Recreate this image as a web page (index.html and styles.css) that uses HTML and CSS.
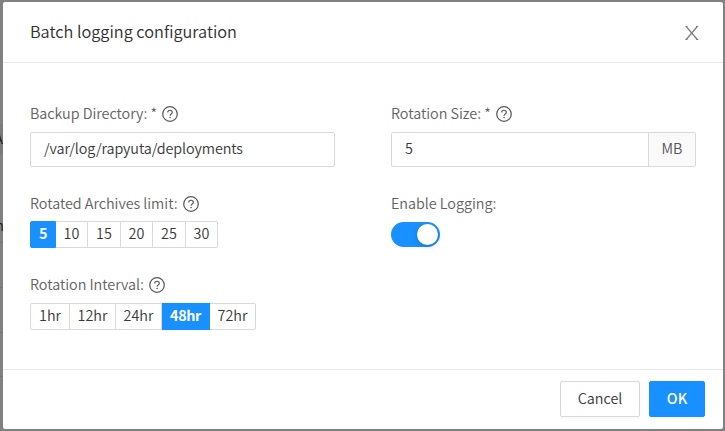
FILE: index.html
```html
<!DOCTYPE html>
<html lang="en">
<head>
<meta charset="utf-8">
<title>Batch logging configuration</title>
<link rel="stylesheet" href="styles.css">
</head>
<body>
<svg class="sprite" aria-hidden="true">
  <symbol id="help" viewBox="0 0 16 16">
    <circle cx="8" cy="8" r="7.3" fill="none" stroke="currentColor" stroke-width="1.25"/>
    <path d="M5.7 6.4C5.7 5 6.7 4.2 8 4.2s2.3.8 2.3 2.1c0 1.8-2.2 1.6-2.2 3.4" fill="none" stroke="currentColor" stroke-width="1.15"/>
    <circle cx="8.1" cy="11.5" r=".8" fill="currentColor"/>
  </symbol>
</svg>
<div class="backdrop" aria-hidden="true">
  <span class="band"></span>
  <span class="peek peek-a">A</span>
  <span class="peek peek-n">n</span>
  <span class="rule rule-1"></span>
  <span class="rule rule-2"></span>
  <span class="rule rule-3"></span>
  <span class="rule rule-4"></span>
</div>
<section class="modal">
  <header class="modal-header">
    <h1 class="title"><span>Batch logging configuration</span></h1>
    <svg class="close" viewBox="0 0 14 16"><path d="M1.2 1.5 12.3 14.5M12.3 1.5 1.2 14.5M.3 1.5h2.2M.3 14.5h2.2M11 1.5h2.2M11 14.5h2.2" fill="none" stroke="currentColor" stroke-width="1.2"/></svg>
  </header>
  <main class="modal-body">
    <div class="column">
      <div class="field field-input">
        <div class="label"><span>Backup Directory: *</span><svg class="help"><use href="#help"/></svg></div>
        <div class="input"><span class="value">/var/log/rapyuta/deployments</span></div>
      </div>
      <div class="field field-limit">
        <div class="label"><span>Rotated Archives limit:</span><svg class="help"><use href="#help"/></svg></div>
        <div class="radios limits">
          <span class="radio active">5</span><span class="radio">10</span><span class="radio">15</span><span class="radio">20</span><span class="radio">25</span><span class="radio">30</span>
        </div>
      </div>
      <div class="field">
        <div class="label"><span>Rotation Interval:</span><svg class="help"><use href="#help"/></svg></div>
        <div class="radios intervals">
          <span class="radio">1hr</span><span class="radio">12hr</span><span class="radio">24hr</span><span class="radio active">48hr</span><span class="radio">72hr</span>
        </div>
      </div>
    </div>
    <div class="column">
      <div class="field field-input">
        <div class="label"><span>Rotation Size: *</span><svg class="help"><use href="#help"/></svg></div>
        <div class="input"><span class="value">5</span><span class="addon">MB</span></div>
      </div>
      <div class="field">
        <div class="label"><span>Enable Logging:</span></div>
        <div class="switch"><span class="knob"></span></div>
      </div>
    </div>
  </main>
  <footer class="modal-footer">
    <span class="button">Cancel</span>
    <span class="button primary">OK</span>
  </footer>
</section>
</body>
</html>
```
FILE: styles.css
```css
* { box-sizing: border-box; }
body {
  margin: 0;
  width: 725px;
  height: 431px;
  overflow: hidden;
  padding: 2px 2px 2px 3px;
  background: #818181;
  font-family: "Noto Sans CJK SC", "Noto Sans", sans-serif;
  font-size: 14.4px;
  font-weight: 350;
  line-height: 20px;
  color: #383838;
  white-space: nowrap;
}
.sprite { position: absolute; width: 0; height: 0; }
.backdrop { position: absolute; left: 0; top: 0; width: 3px; height: 431px; overflow: hidden; }
.band { position: absolute; top: 124px; width: 3px; height: 30px; background: #7b7b7b; }
.peek { position: absolute; right: 0; color: #1c1c1c; }
.peek-a { top: 128px; }
.peek-n { top: 215px; right: -1px; }
.rule { position: absolute; left: 0; width: 3px; height: 1px; background: #757575; }
.rule-1 { top: 242px; }
.rule-2 { top: 287px; }
.rule-3 { top: 332px; }
.rule-4 { top: 376px; }
.modal {
  position: relative;
  width: 720px;
  height: 427px;
  background: #fff;
  border-radius: 2px;
  display: flex;
  flex-direction: column;
}
.modal-header {
  height: 61px;
  flex: none;
  display: flex;
  align-items: center;
  justify-content: space-between;
  padding: 0 24px 0 27px;
  border-bottom: 1px solid #e8e8e8;
}
.title { margin: 0 0 2px; font-size: 16.3px; font-weight: 350; line-height: 24px; color: #303030; }
.close { width: 14px; height: 16px; color: #7c7c7c; margin-top: 2px; }
.modal-body {
  flex: 1;
  display: grid;
  grid-template-columns: 305px 305px;
  column-gap: 56px;
  padding: 41px 27px 0;
}
.label {
  display: flex;
  align-items: center;
  gap: 5px;
  height: 20px;
  color: #626262;
  letter-spacing: -0.04px;
}
.label span { margin-bottom: 2px; }
.help { width: 16px; height: 16px; color: #595959; flex: none; }
.field-input { height: 90px; }
.field-limit { height: 81px; }
.input {
  margin-top: 8px;
  height: 35px;
  border: 1px solid #d9d9d9;
  border-radius: 2px;
  display: flex;
  line-height: 29px;
}
.value { flex: 1; padding-left: 13px; letter-spacing: -0.1px; }
.addon {
  width: 47px;
  text-align: center;
  background: #fafafa;
  border-left: 1px solid #d9d9d9;
  color: #555;
}
.radios { display: flex; margin-top: 7px; height: 27px; line-height: 21px; }
.intervals { margin-top: 8px; }
.radio { border: 1px solid #d9d9d9; border-left: 0; text-align: center; }
.radio:first-child { border-left: 1px solid #d9d9d9; border-radius: 2px 0 0 2px; }
.radio:last-child { border-radius: 0 2px 2px 0; }
.radios .active { background: #1890ff; border-color: #1890ff; color: #fff; font-weight: 700; letter-spacing: -0.4px; }
.limits { display: grid; grid-template-columns: 26px 32px 33px 32px 33px 32px; }
.intervals { display: grid; grid-template-columns: 40px 46px 46px 48px 46px; }
.switch {
  margin-top: 8px;
  width: 49px;
  height: 25px;
  border-radius: 13px;
  background: #1890ff;
  display: flex;
  justify-content: flex-end;
  padding: 2px;
}
.knob { width: 21px; height: 21px; border-radius: 50%; background: #fff; box-shadow: 0 2px 4px rgba(0, 35, 11, .2); }
.modal-footer {
  height: 60px;
  flex: none;
  border-top: 1px solid #e8e8e8;
  display: flex;
  justify-content: flex-end;
  gap: 9px;
  padding: 11px 18px 0 0;
}
.button {
  width: 80px;
  height: 36px;
  line-height: 32px;
  text-align: center;
  border: 1px solid #d9d9d9;
  border-radius: 2px;
  box-shadow: 0 2px 0 rgba(0, 0, 0, .015);
}
.primary { width: 56px; background: #1890ff; border-color: #1890ff; color: #fff; font-weight: 500; }
```
